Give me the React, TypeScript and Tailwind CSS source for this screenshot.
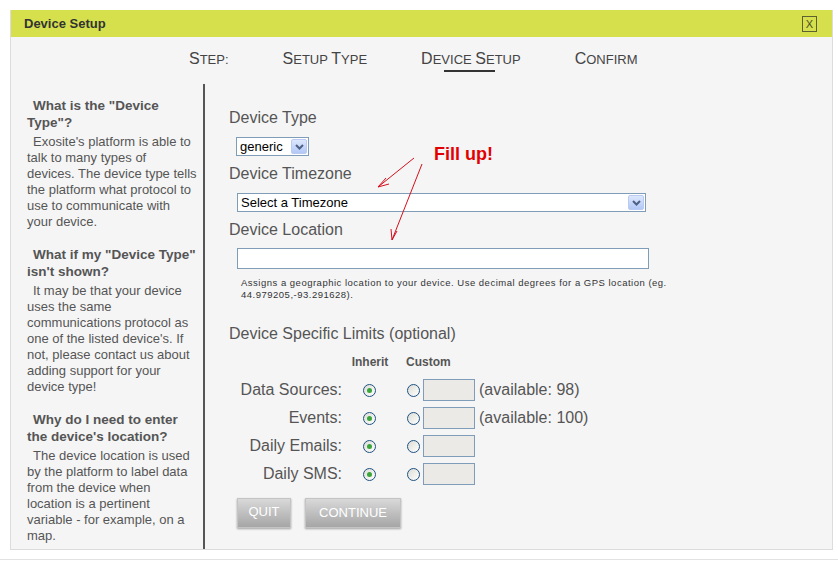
import React from 'react';

const font = "font-['Liberation_Sans',Arial,sans-serif]";

const Chevron = () => (
  <svg width="9" height="6" viewBox="0 0 9 6">
    <path d="M1 1 L4.5 4.5 L8 1" stroke="#4d6185" strokeWidth="2" fill="none" />
  </svg>
);

const XpSelect: React.FC<{ value: string; className: string }> = ({ value, className }) => (
  <div className={`flex items-stretch border border-[#7f9db9] bg-white ${className}`}>
    <span className="flex-1 pl-[3px] text-[13px] leading-none text-black flex items-center">{value}</span>
    <span className="w-[16px] m-[1px] rounded-[2px] border border-[#b9cbf3] bg-gradient-to-b from-[#dde7fd] to-[#b3c8f6] flex items-center justify-center">
      <Chevron />
    </span>
  </div>
);

const Radio: React.FC<{ checked?: boolean }> = ({ checked }) => (
  <span className="w-[13px] h-[13px] rounded-full border border-[#1d5281] bg-gradient-to-br from-[#dcdcd6] to-white flex items-center justify-center">
    {checked && <span className="w-[5px] h-[5px] rounded-full bg-[#3aa53a]" />}
  </span>
);

const limits = [
  { label: 'Data Sources:', avail: '(available: 98)' },
  { label: 'Events:', avail: '(available: 100)' },
  { label: 'Daily Emails:', avail: '' },
  { label: 'Daily SMS:', avail: '' },
];

// lines kept as in the original wrap
const help = [
  {
    q: ['What is the "Device', 'Type"?'],
    a: [
      "Exosite's platform is able to",
      'talk to many types of',
      'devices. The device type tells',
      'the platform what protocol to',
      'use to communicate with',
      'your device.',
    ],
  },
  {
    q: ['What if my "Device Type"', "isn't shown?"],
    a: [
      'It may be that your device',
      'uses the same',
      'communications protocol as',
      "one of the listed device's. If",
      'not, please contact us about',
      'adding support for your',
      'device type!',
    ],
  },
  {
    q: ['Why do I need to enter', "the device's location?"],
    a: [
      'The device location is used',
      'by the platform to label data',
      'from the device when',
      'location is a pertinent',
      'variable - for example, on a',
      'map.',
    ],
  },
];

// small caps drawn by hand: first letter of each word larger
const Step: React.FC<{ words: string[]; active?: boolean }> = ({ words, active }) => (
  <span className="relative text-[#444] leading-none whitespace-nowrap">
    {words.map((w, i) => (
      <React.Fragment key={w}>
        {i > 0 && <span className="text-[13px]"> </span>}
        <span className="text-[16px]">{w[0]}</span>
        <span className="text-[13px]">{w.slice(1)}</span>
      </React.Fragment>
    ))}
    {active && <span className="absolute left-[23px] right-[26px] -bottom-[5px] h-[2px] bg-[#333]" />}
  </span>
);

export default function App() {
  return (
    <div className={`relative w-[838px] h-[562px] bg-white pt-[10px] pl-[10px] ${font}`}>
      <div className="w-[823px] h-[540px] border border-[#dcdcdc] bg-[#f5f5f6] flex flex-col">
        {/* Title bar */}
        <div className="h-[27px] -mt-[1px] bg-[#d6e04d] flex items-center justify-between pl-[13px] pr-[15px]">
          <span className="text-[13px] font-bold text-[#333]">Device Setup</span>
          <span className="w-[15px] h-[16px] border border-[#5d6030] text-[11px] leading-[14px] text-[#4a4d25] text-center">X</span>
        </div>

        {/* Steps */}
        <div className="h-[44px] flex items-center pl-[178px] gap-[54px] pb-[1px]">
          <Step words={['STEP:']} />
          <Step words={['SETUP', 'TYPE']} />
          <Step words={['DEVICE', 'SETUP']} active />
          <Step words={['CONFIRM']} />
        </div>

        <div className="flex flex-1 min-h-0">
          {/* Sidebar */}
          <div className="w-[194px] border-r-2 border-[#555] mt-[3px] pl-[16px] pr-[4px] pt-[13px] flex flex-col gap-[16px] text-[#555] whitespace-nowrap">
            {help.map((h) => (
              <div key={h.q[0]}>
                <div className="text-[13.5px] font-bold leading-[17px] mb-[3px]">
                  {h.q.map((line, i) => (
                    <div key={line} className={i === 0 ? 'pl-[6px]' : ''}>{line}</div>
                  ))}
                </div>
                <div className="text-[13px] leading-[16px]">
                  {h.a.map((line, i) => (
                    <div key={line} className={i === 0 ? 'pl-[6px]' : ''}>{line}</div>
                  ))}
                </div>
              </div>
            ))}
          </div>

          {/* Main */}
          <div className="flex-1 pl-[24px] pt-[27px] flex flex-col items-start text-[#555]">
            <div className="text-[16px] leading-[19px]">Device Type</div>
            <XpSelect value="generic" className="mt-[10px] ml-[7px] w-[73px] h-[19px]" />
            <div className="mt-[8px] text-[16px] leading-[19px]">Device Timezone</div>
            <XpSelect value="Select a Timezone" className="mt-[10px] ml-[8px] w-[409px] h-[19px]" />
            <div className="mt-[8px] text-[16px] leading-[19px]">Device Location</div>
            <div className="mt-[9px] ml-[8px] w-[412px] h-[21px] border border-[#7f9db9] bg-white" />
            <div className="mt-[8px] ml-[12px] w-[430px] text-[9.5px] leading-[12px] tracking-[0.5px] text-[#333]">
              Assigns a geographic location to your device. Use decimal degrees for a GPS location (eg. 44.979205,-93.291628).
            </div>
            <div className="mt-[23px] text-[16px] leading-[19px]">Device Specific Limits (optional)</div>

            <div className="mt-[12px] grid grid-cols-[114px_54px_auto] items-center">
              <span />
              <span className="text-[12px] font-bold leading-[15px] text-center">Inherit</span>
              <span className="text-[12px] font-bold leading-[15px] pl-[9px]">Custom</span>
            </div>
            <div className="mt-[6px] flex flex-col">
              {limits.map((l) => (
                <div key={l.label} className="h-[28px] grid grid-cols-[113px_54px_auto] items-center">
                  <span className="text-[16px] text-right">{l.label}</span>
                  <span className="flex justify-center">
                    <Radio checked />
                  </span>
                  <span className="flex items-center pl-[11px]">
                    <Radio />
                    <span className="ml-[3px] w-[52px] h-[22px] border border-[#7f9db9] bg-[#ebeae6]" />
                    {l.avail && <span className="ml-[4px] text-[16px]">{l.avail}</span>}
                  </span>
                </div>
              ))}
            </div>

            <div className="mt-[10px] ml-[8px] flex gap-[14px]">
              <button className="w-[54px] h-[30px] pb-[3px] bg-gradient-to-b from-[#d9d9d9] to-[#a6a6a6] border border-[#c4c4c4] shadow-[0_1px_2px_rgba(0,0,0,0.35)] text-white text-[13px]">
                QUIT
              </button>
              <button className="w-[96px] h-[30px] bg-gradient-to-b from-[#d9d9d9] to-[#a6a6a6] border border-[#c4c4c4] shadow-[0_1px_2px_rgba(0,0,0,0.35)] text-white text-[13px]">
                CONTINUE
              </button>
            </div>
          </div>
        </div>
      </div>
      <div className="mt-[9px] -ml-[10px] h-[1px] bg-[#e2e2e2]" />

      {/* Annotation overlay */}
      <div className="absolute left-[434px] top-[141px] text-[18px] font-bold text-[#e20000] pointer-events-none">Fill up!</div>
      <svg className="absolute left-0 top-0 pointer-events-none" width="838" height="562">
        <g stroke="#d4101c" strokeWidth="1" fill="none">
          <path d="M414 158 L378 187" />
          <path d="M378 187 L386 178 M378 187 L389 184" />
          <path d="M422 164 L392 240" />
          <path d="M392 240 L391 229 M392 240 L397 231" />
        </g>
      </svg>
    </div>
  );
}
